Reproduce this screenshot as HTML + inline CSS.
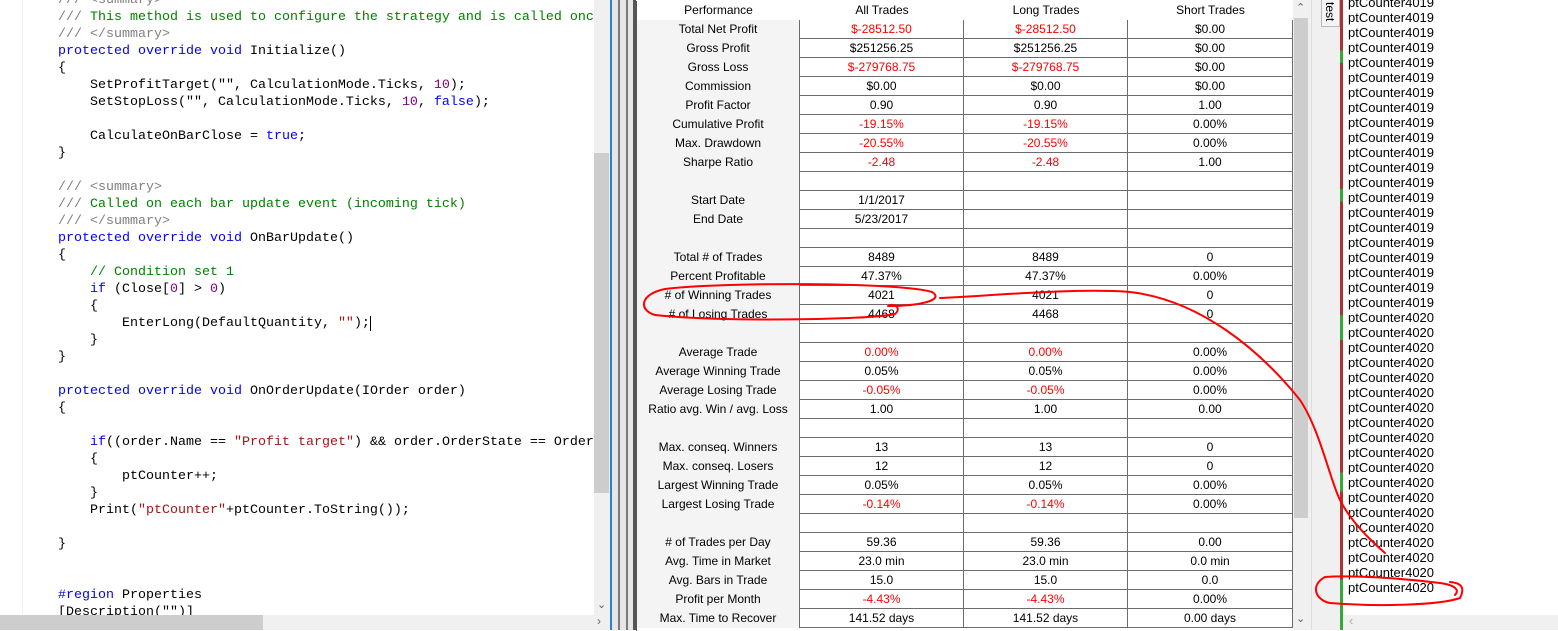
<!DOCTYPE html>
<html><head><meta charset="utf-8"><style>
*{margin:0;padding:0;box-sizing:border-box}
body{width:1558px;height:630px;overflow:hidden;background:#fff;position:relative;font-family:"Liberation Sans",Arial,sans-serif}
.code{position:absolute;left:0;top:0;width:594px;height:615px;background:#fff;overflow:hidden;font-family:"Liberation Mono","Courier New",monospace;font-size:13.33px;color:#000}
.code div{position:absolute;left:58px;white-space:pre;height:17px;line-height:17px}
.k{color:#0000ff}.c{color:#008000}.g{color:#808080}.n{color:#800080}.s{color:#a31515}
.tbl{position:absolute;left:636px;top:1px;width:657px;height:630px;font-size:12px;border-left:1px solid #555}
.r{position:absolute;left:0;width:657px;height:19px;line-height:19px;border-bottom:1px solid #6b6b6b}
.r span{position:absolute;top:0;text-align:center;height:19px;border-right:1px solid #6b6b6b}
.r span.a{left:0;width:163px;background:#f4f4f4}
.r span.b{left:163px;width:164px}
.r span.d{left:327px;width:164px}
.r span.e{left:491px;width:165px}
.red{color:#ff0000}
.out{position:absolute;left:1343px;top:0;width:215px;height:615px;background:#fff;overflow:hidden;font-size:13px}
.out div{position:absolute;left:5px;height:15px;line-height:15px;color:#000}
</style></head><body>
<div class="code">
<div style="left:22px;top:0;width:1px;height:615px;background:#eee"></div>
<div style="top:-8px"><span class="g">/// &lt;summary&gt;</span></div>
<div style="top:9px"><span class="g">///</span><span class="c"> This method is used to configure the strategy and is called onc</span></div>
<div style="top:26px"><span class="g">/// &lt;/summary&gt;</span></div>
<div style="top:43px"><span class="k">protected override void</span> Initialize()</div>
<div style="top:60px">{</div>
<div style="top:77px">    SetProfitTarget("", CalculationMode.Ticks, <span class="n">10</span>);</div>
<div style="top:94px">    SetStopLoss("", CalculationMode.Ticks, <span class="n">10</span>, <span class="k">false</span>);</div>
<div style="top:128px">    CalculateOnBarClose = <span class="k">true</span>;</div>
<div style="top:145px">}</div>
<div style="top:179px"><span class="g">/// &lt;summary&gt;</span></div>
<div style="top:196px"><span class="g">///</span><span class="c"> Called on each bar update event (incoming tick)</span></div>
<div style="top:213px"><span class="g">/// &lt;/summary&gt;</span></div>
<div style="top:230px"><span class="k">protected override void</span> OnBarUpdate()</div>
<div style="top:247px">{</div>
<div style="top:264px">    <span class="c">// Condition set 1</span></div>
<div style="top:281px">    <span class="k">if</span> (Close[<span class="n">0</span>] &gt; <span class="n">0</span>)</div>
<div style="top:298px">    {</div>
<div style="top:315px">        EnterLong(DefaultQuantity, <span class="s">""</span>);<span style="border-left:1px solid #000"> </span></div>
<div style="top:332px">    }</div>
<div style="top:349px">}</div>
<div style="top:383px"><span class="k">protected override void</span> OnOrderUpdate(IOrder order)</div>
<div style="top:400px">{</div>
<div style="top:434px">    <span class="k">if</span>((order.Name == <span class="s">"Profit target"</span>) &amp;&amp; order.OrderState == Order</div>
<div style="top:451px">    {</div>
<div style="top:468px">        ptCounter++;</div>
<div style="top:485px">    }</div>
<div style="top:502px">    Print(<span class="s">"ptCounter"</span>+ptCounter.ToString());</div>
<div style="top:536px">}</div>
<div style="top:587px"><span class="k">#region</span> Properties</div>
<div style="top:604px">[Description("")]</div>
</div>
<div style="position:absolute;left:594px;top:0;width:16px;height:615px;background:#f0f0f0"></div>
<div style="position:absolute;left:594px;top:153px;width:15px;height:340px;background:#cdcdcd"></div>
<div style="position:absolute;left:597px;top:598px;font-size:11px;color:#606060">&#8964;</div>
<div style="position:absolute;left:0;top:615px;width:610px;height:15px;background:#f0f0f0"></div>
<div style="position:absolute;left:0;top:615px;width:263px;height:15px;background:#cdcdcd"></div>
<div style="position:absolute;left:597px;top:614px;font-size:12px;color:#606060">›</div>
<div style="position:absolute;left:610px;top:0;width:2px;height:630px;background:#2f7fd0"></div>
<div style="position:absolute;left:612px;top:0;width:24px;height:630px;background:#e6e6e6"></div>
<div style="position:absolute;left:618px;top:0;width:2px;height:630px;background:#7a7a7a"></div>
<div style="position:absolute;left:626px;top:0;width:2px;height:630px;background:#7a7a7a"></div>
<div style="position:absolute;left:633px;top:0;width:3px;height:630px;background:#555"></div>

<div class="tbl">
<div class="r" style="top:0;border-bottom:none"><span class="a" style="background:#fff;border-right:none">Performance</span><span class="b" style="border-right:none">All Trades</span><span class="d" style="border-right:none">Long Trades</span><span class="e" style="border-right:none">Short Trades</span></div>
<div class="r" style="top:19px"><span class="a">Total Net Profit</span><span class="b red">$-28512.50</span><span class="d red">$-28512.50</span><span class="e">$0.00</span></div>
<div class="r" style="top:38px"><span class="a">Gross Profit</span><span class="b">$251256.25</span><span class="d">$251256.25</span><span class="e">$0.00</span></div>
<div class="r" style="top:57px"><span class="a">Gross Loss</span><span class="b red">$-279768.75</span><span class="d red">$-279768.75</span><span class="e">$0.00</span></div>
<div class="r" style="top:76px"><span class="a">Commission</span><span class="b">$0.00</span><span class="d">$0.00</span><span class="e">$0.00</span></div>
<div class="r" style="top:95px"><span class="a">Profit Factor</span><span class="b">0.90</span><span class="d">0.90</span><span class="e">1.00</span></div>
<div class="r" style="top:114px"><span class="a">Cumulative Profit</span><span class="b red">-19.15%</span><span class="d red">-19.15%</span><span class="e">0.00%</span></div>
<div class="r" style="top:133px"><span class="a">Max. Drawdown</span><span class="b red">-20.55%</span><span class="d red">-20.55%</span><span class="e">0.00%</span></div>
<div class="r" style="top:152px"><span class="a">Sharpe Ratio</span><span class="b red">-2.48</span><span class="d red">-2.48</span><span class="e">1.00</span></div>
<div class="r" style="top:171px"><span class="a"></span><span class="b"></span><span class="d"></span><span class="e"></span></div>
<div class="r" style="top:190px"><span class="a">Start Date</span><span class="b">1/1/2017</span><span class="d"></span><span class="e"></span></div>
<div class="r" style="top:209px"><span class="a">End Date</span><span class="b">5/23/2017</span><span class="d"></span><span class="e"></span></div>
<div class="r" style="top:228px"><span class="a"></span><span class="b"></span><span class="d"></span><span class="e"></span></div>
<div class="r" style="top:247px"><span class="a">Total # of Trades</span><span class="b">8489</span><span class="d">8489</span><span class="e">0</span></div>
<div class="r" style="top:266px"><span class="a">Percent Profitable</span><span class="b">47.37%</span><span class="d">47.37%</span><span class="e">0.00%</span></div>
<div class="r" style="top:285px"><span class="a"># of Winning Trades</span><span class="b">4021</span><span class="d">4021</span><span class="e">0</span></div>
<div class="r" style="top:304px"><span class="a"># of Losing Trades</span><span class="b">4468</span><span class="d">4468</span><span class="e">0</span></div>
<div class="r" style="top:323px"><span class="a"></span><span class="b"></span><span class="d"></span><span class="e"></span></div>
<div class="r" style="top:342px"><span class="a">Average Trade</span><span class="b red">0.00%</span><span class="d red">0.00%</span><span class="e">0.00%</span></div>
<div class="r" style="top:361px"><span class="a">Average Winning Trade</span><span class="b">0.05%</span><span class="d">0.05%</span><span class="e">0.00%</span></div>
<div class="r" style="top:380px"><span class="a">Average Losing Trade</span><span class="b red">-0.05%</span><span class="d red">-0.05%</span><span class="e">0.00%</span></div>
<div class="r" style="top:399px"><span class="a">Ratio avg. Win / avg. Loss</span><span class="b">1.00</span><span class="d">1.00</span><span class="e">0.00</span></div>
<div class="r" style="top:418px"><span class="a"></span><span class="b"></span><span class="d"></span><span class="e"></span></div>
<div class="r" style="top:437px"><span class="a">Max. conseq. Winners</span><span class="b">13</span><span class="d">13</span><span class="e">0</span></div>
<div class="r" style="top:456px"><span class="a">Max. conseq. Losers</span><span class="b">12</span><span class="d">12</span><span class="e">0</span></div>
<div class="r" style="top:475px"><span class="a">Largest Winning Trade</span><span class="b">0.05%</span><span class="d">0.05%</span><span class="e">0.00%</span></div>
<div class="r" style="top:494px"><span class="a">Largest Losing Trade</span><span class="b red">-0.14%</span><span class="d red">-0.14%</span><span class="e">0.00%</span></div>
<div class="r" style="top:513px"><span class="a"></span><span class="b"></span><span class="d"></span><span class="e"></span></div>
<div class="r" style="top:532px"><span class="a"># of Trades per Day</span><span class="b">59.36</span><span class="d">59.36</span><span class="e">0.00</span></div>
<div class="r" style="top:551px"><span class="a">Avg. Time in Market</span><span class="b">23.0 min</span><span class="d">23.0 min</span><span class="e">0.0 min</span></div>
<div class="r" style="top:570px"><span class="a">Avg. Bars in Trade</span><span class="b">15.0</span><span class="d">15.0</span><span class="e">0.0</span></div>
<div class="r" style="top:589px"><span class="a">Profit per Month</span><span class="b red">-4.43%</span><span class="d red">-4.43%</span><span class="e">0.00%</span></div>
<div class="r" style="top:608px"><span class="a">Max. Time to Recover</span><span class="b">141.52 days</span><span class="d">141.52 days</span><span class="e">0.00 days</span></div>
</div>
<div style="position:absolute;left:1293px;top:0;width:16px;height:630px;background:#f0f0f0"></div>
<div style="position:absolute;left:1294px;top:18px;width:14px;height:500px;background:#cdcdcd"></div>
<div style="position:absolute;left:1296px;top:1px;font-size:11px;color:#606060">&#8963;</div>
<div style="position:absolute;left:1296px;top:612px;font-size:11px;color:#606060">&#8964;</div>
<div style="position:absolute;left:1309px;top:0;width:34px;height:630px;background:#f0f0f0"></div>
<div style="position:absolute;left:1311px;top:0;width:1px;height:630px;background:#ddd"></div>
<div style="position:absolute;left:1321px;top:0;width:19px;height:27px;background:#f4f4f4;border:1px solid #bbb;border-top:none"></div>
<div style="position:absolute;left:1323px;top:2px;font-size:12px;writing-mode:vertical-rl;color:#000">test</div>
<div style="position:absolute;left:1340px;top:0;width:3px;height:630px;background:linear-gradient(#a33 0 8%,#3a3 8% 10%,#a33 10% 30%,#3a3 30% 32%,#a33 32% 50%,#3a3 50% 54%,#a33 54% 75%,#3a3 75% 78%,#a33 78% 92%,#3a3 92%)"></div>

<div class="out">
<div style="top:-5px">ptCounter4019</div><div style="top:10px">ptCounter4019</div><div style="top:25px">ptCounter4019</div><div style="top:40px">ptCounter4019</div><div style="top:55px">ptCounter4019</div><div style="top:70px">ptCounter4019</div><div style="top:85px">ptCounter4019</div><div style="top:100px">ptCounter4019</div><div style="top:115px">ptCounter4019</div><div style="top:130px">ptCounter4019</div><div style="top:145px">ptCounter4019</div><div style="top:160px">ptCounter4019</div><div style="top:175px">ptCounter4019</div><div style="top:190px">ptCounter4019</div><div style="top:205px">ptCounter4019</div><div style="top:220px">ptCounter4019</div><div style="top:235px">ptCounter4019</div><div style="top:250px">ptCounter4019</div><div style="top:265px">ptCounter4019</div><div style="top:280px">ptCounter4019</div><div style="top:295px">ptCounter4019</div>
<div style="top:310px">ptCounter4020</div><div style="top:325px">ptCounter4020</div><div style="top:340px">ptCounter4020</div><div style="top:355px">ptCounter4020</div><div style="top:370px">ptCounter4020</div><div style="top:385px">ptCounter4020</div><div style="top:400px">ptCounter4020</div><div style="top:415px">ptCounter4020</div><div style="top:430px">ptCounter4020</div><div style="top:445px">ptCounter4020</div><div style="top:460px">ptCounter4020</div><div style="top:475px">ptCounter4020</div><div style="top:490px">ptCounter4020</div><div style="top:505px">ptCounter4020</div><div style="top:520px">ptCounter4020</div><div style="top:535px">ptCounter4020</div><div style="top:550px">ptCounter4020</div><div style="top:565px">ptCounter4020</div><div style="top:580px">ptCounter4020</div>
</div>
<div style="position:absolute;left:1343px;top:615px;width:215px;height:15px;background:#f0f0f0"></div>
<div style="position:absolute;left:1349px;top:613px;font-size:13px;color:#aaa">‹</div>

<svg style="position:absolute;left:0;top:0" width="1558" height="630" fill="none" stroke="#ff0000" stroke-width="2" stroke-linecap="round">
<path d="M888,306 C920,306 945,300 932,292 C900,282 720,282 665,289 C640,294 638,310 655,315 C720,322 870,320 895,314 C900,310 898,304 890,305"/>
<path d="M940,298 C1000,295 1080,288 1130,292 C1200,300 1260,350 1300,400 C1320,430 1330,480 1340,500 C1350,520 1370,540 1385,553"/>
<path d="M1455,595 C1460,590 1455,585 1440,583 C1400,578 1350,575 1325,577 C1310,585 1315,600 1330,603 C1380,607 1440,605 1460,598 C1465,588 1462,583 1450,582"/>
</svg>
</body></html>
